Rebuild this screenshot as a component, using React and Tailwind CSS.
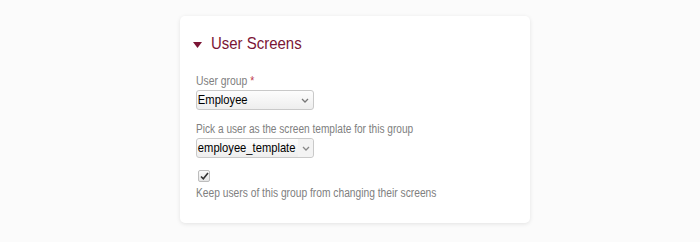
export default function App() {
  return (
    <div className="w-[700px] h-[242px] bg-[#fbfbfb] pt-[16px] pl-[180px]" style={{ fontFamily: '"Liberation Sans", Arial, sans-serif' }}>
      <div className="w-[350px] h-[207px] bg-white rounded-[5px] shadow-[0_1px_4px_rgba(0,0,0,0.10)] pl-[13px] pt-[18px]">
        <div className="flex items-center gap-[9px]">
          <svg width="9" height="6" viewBox="0 0 9 6" className="mt-[1px]"><path d="M0 0 L9 0 L4.5 6 Z" fill="#7b1535" /></svg>
          <span className="text-[17px] leading-[20px] text-[#7b1535] origin-left scale-x-[0.88] whitespace-nowrap">User Screens</span>
        </div>
        <div className="mt-[20px] pl-[3px]">
          <div className="text-[12.5px] leading-[14px] text-[#808080] origin-left scale-x-[0.83] whitespace-nowrap">User group <span className="text-[#c0394b]">*</span></div>
          <div className="mt-[2px] w-[118px] h-[20px] rounded-[3px] border border-[#c9c9c9] bg-gradient-to-b from-[#fdfdfd] to-[#eeeeee] flex items-center">
            <span className="flex-1 pl-[1px] text-[13px] text-black origin-left scale-x-[0.86] whitespace-nowrap">Employee</span>
            <span className="w-[16px] h-full flex items-center justify-center">
              <svg width="8" height="5" viewBox="0 0 8 5"><path d="M1 1 L4 4 L7 1" stroke="#777" strokeWidth="1.3" fill="none" /></svg>
            </span>
          </div>
          <div className="mt-[12px] text-[12.5px] leading-[14px] text-[#808080] origin-left scale-x-[0.81] whitespace-nowrap">Pick a user as the screen template for this group</div>
          <div className="mt-[2px] w-[118px] h-[20px] rounded-[3px] border border-[#c9c9c9] bg-gradient-to-b from-[#fdfdfd] to-[#eeeeee] flex items-center relative">
            <span className="flex-1 pl-[1px] text-[13px] text-black origin-left scale-x-[0.86] whitespace-nowrap">employee_template</span>
            <span className="absolute right-0 top-0 w-[15px] h-full flex items-center justify-center bg-[#f3f3f3] rounded-r-[3px]">
              <svg width="8" height="5" viewBox="0 0 8 5"><path d="M1 1 L4 4 L7 1" stroke="#888" strokeWidth="1.3" fill="none" /></svg>
            </span>
          </div>
          <div className="mt-[12px] ml-[2px] w-[12px] h-[12px] rounded-[2px] border border-[#bdbdbd] bg-gradient-to-b from-[#fafafa] to-[#e6e6e6] flex items-center justify-center">
            <svg width="9" height="8" viewBox="0 0 9 8"><path d="M1 4.5 L3.3 6.8 L8 1" stroke="#333" strokeWidth="1.6" fill="none" /></svg>
          </div>
          <div className="mt-[4px] text-[12.5px] leading-[14px] text-[#808080] origin-left scale-x-[0.82] whitespace-nowrap">Keep users of this group from changing their screens</div>
        </div>
      </div>
    </div>
  );
}
